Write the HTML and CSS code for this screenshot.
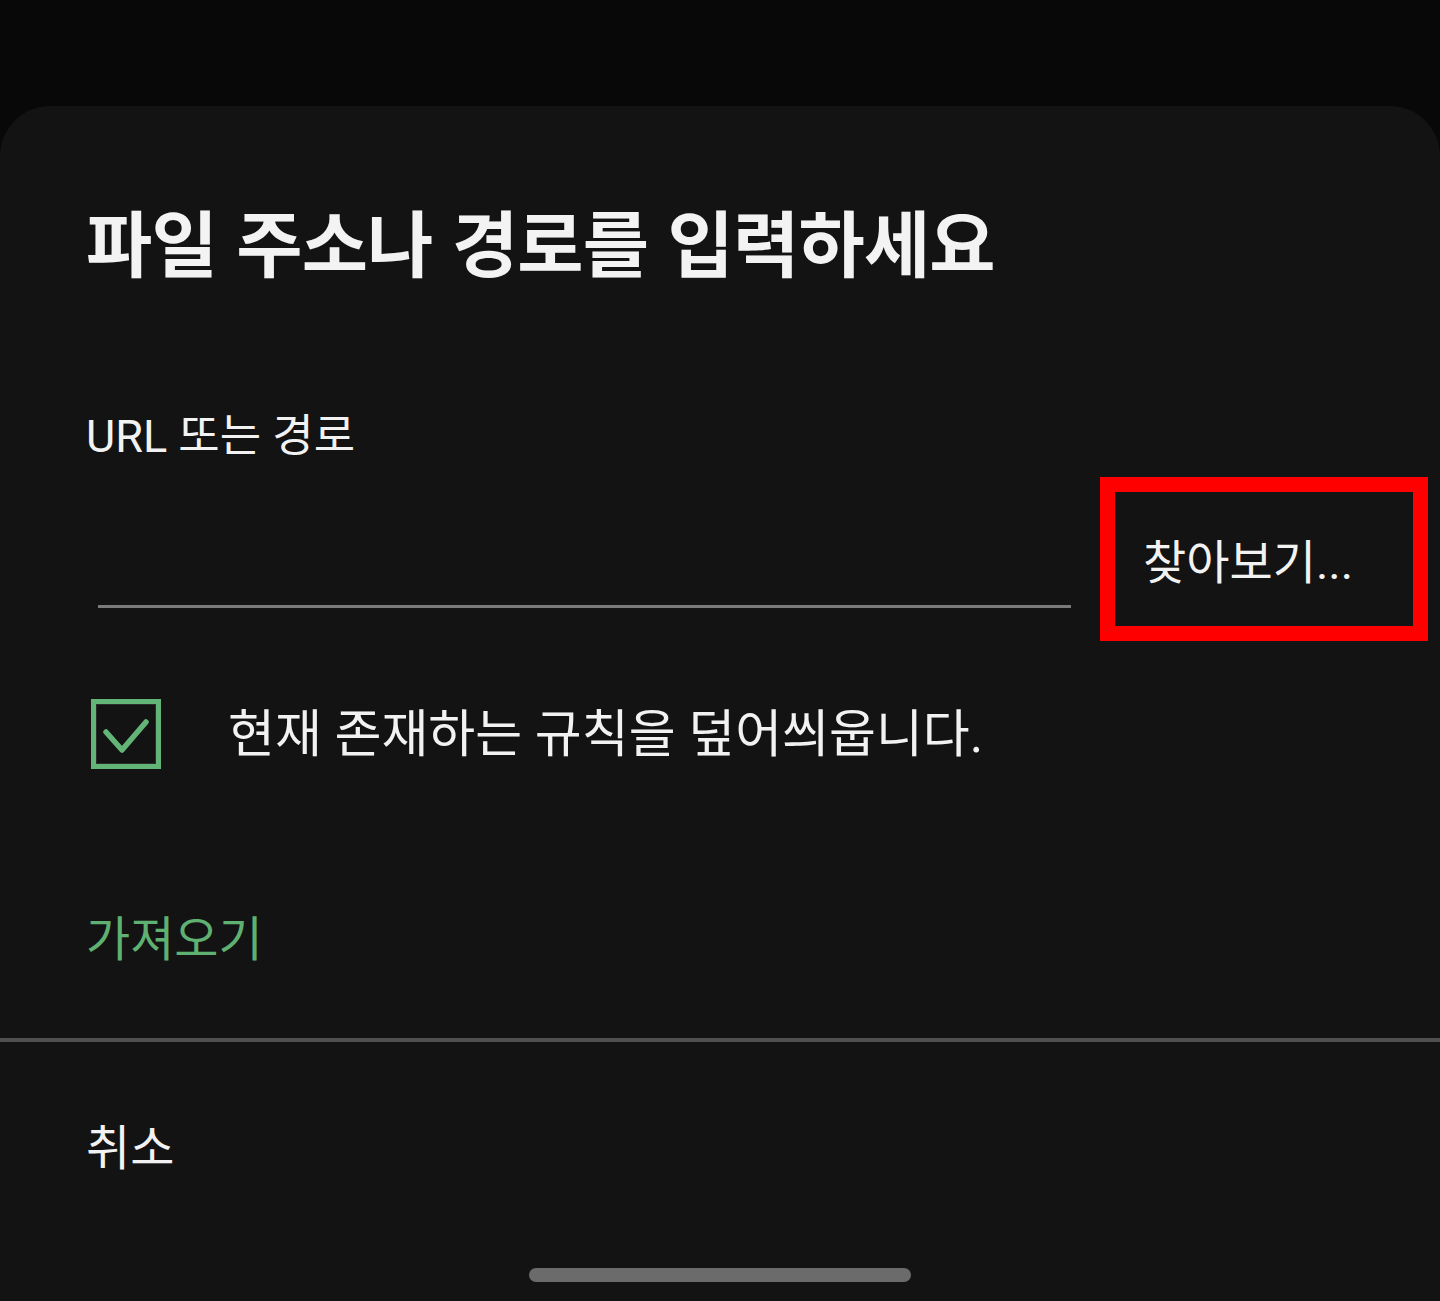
FILE: index.html
```html
<!DOCTYPE html>
<html lang="ko">
<head>
    <meta charset="UTF-8">
    <meta name="viewport" content="width=device-width, initial-scale=1.0">
    <title>파일 주소나 경로를 입력하세요</title>
    <link rel="stylesheet" href="styles.css">
</head>
<body>

    <!-- Bottom sheet -->
    <div class="sheet">
        <h1 class="sheet-title">파일 주소나 경로를 입력하세요</h1>

        <div class="field-label">URL 또는 경로</div>

        <div class="field-row">
            <div class="field-input"></div>
            <button class="browse-btn">찾아보기...</button>
        </div>

        <label class="check-row">
            <span class="check-box">
                <svg width="60" height="60" viewBox="0 0 60 60">
                    <polyline points="10,28 26,46 50,18" fill="none" stroke="#63b577" stroke-width="5.5" stroke-linecap="round" stroke-linejoin="round"/>
                </svg>
            </span>
            <span class="check-text">현재 존재하는 규칙을 덮어씌웁니다.</span>
        </label>

        <div class="action-import">가져오기</div>

        <div class="divider"></div>

        <div class="action-cancel">취소</div>

        <div class="home-bar"></div>
    </div>

</body>
</html>
```

FILE: styles.css
```css
/* Umum */
body {
    margin: 0;
    padding: 0;
    background-color: #080808;
    font-family: Roboto, "Noto Sans CJK KR", sans-serif;
    color: #f2f2f2;
}

/* Sheet */
.sheet {
    margin-top: 106px;
    height: 1195px;
    background-color: #131313;
    border-radius: 50px 50px 0 0;
    padding-top: 98px;
    box-sizing: border-box;
    display: flex;
    flex-direction: column;
}

.sheet-title {
    margin: 0 0 138px 86px;
    font-family: "Noto Sans CJK KR", sans-serif;
    font-size: 72px;
    font-weight: bold;
    line-height: 1;
    letter-spacing: -0.8px;
    color: #f3f3f3;
}

.field-label {
    margin-left: 86px;
    font-size: 45px;
    line-height: 1;
}

/* Input + tombol */
.field-row {
    display: flex;
    margin-top: 18px;
    padding-left: 98px;
    padding-right: 12px;
    gap: 29px;
}

.field-input {
    flex: 1;
    height: 128px;
    border-bottom: 3px solid #7a7a7a;
}

.browse-btn {
    width: 328px;
    height: 164px;
    border: 15px solid #ff0000;
    background-color: #131313;
    color: #f2f2f2;
    font-family: Roboto, "Noto Sans CJK KR", sans-serif;
    font-size: 47px;
    text-align: left;
    padding: 0 0 2px 28px;
    box-sizing: border-box;
}

/* Checkbox */
.check-row {
    display: flex;
    align-items: center;
    margin: 58px 0 0 91px;
    gap: 67px;
}

.check-box {
    width: 70px;
    height: 70px;
    border: 5px solid #63b577;
    box-shadow: inset 0 0 0 1px #2c2c2c;
    box-sizing: border-box;
    display: flex;
}

.check-text {
    font-size: 51px;
    line-height: 1;
}

/* Tombol aksi */
.action-import {
    margin: 147px 0 0 86px;
    font-size: 48px;
    line-height: 1;
    color: #5fb172;
}

.divider {
    margin-top: 74px;
    height: 4px;
    background-color: #505050;
}

.action-cancel {
    margin: 83px 0 0 86px;
    font-size: 48px;
    line-height: 1;
}

.home-bar {
    margin: auto auto 19px;
    width: 382px;
    height: 14px;
    border-radius: 7px;
    background-color: #6b6b6b;
}
```
